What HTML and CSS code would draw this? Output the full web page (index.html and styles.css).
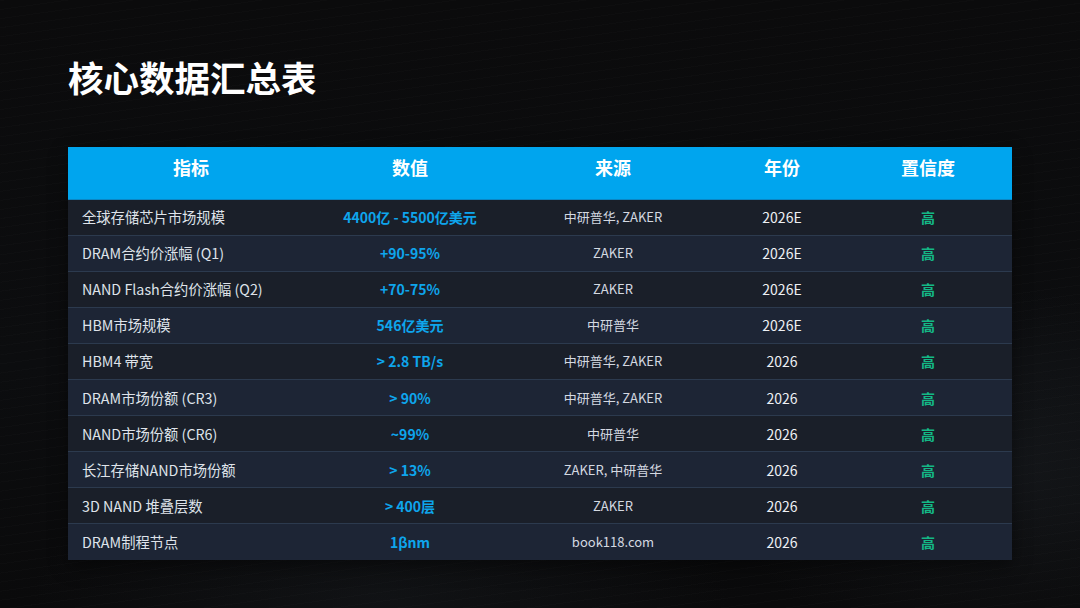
FILE: index.html
```html
<!DOCTYPE html>
<html lang="zh-CN">
<head>
<meta charset="utf-8">
<title>核心数据汇总表</title>
<link rel="stylesheet" href="styles.css">
</head>
<body>
<div class="slide">
  <h1 class="title">核心数据汇总表</h1>
  <table class="data">
    <colgroup>
      <col class="c1"><col class="c2"><col class="c3"><col class="c4"><col class="c5">
    </colgroup>
    <thead>
      <tr><th>指标</th><th>数值</th><th>来源</th><th>年份</th><th>置信度</th></tr>
    </thead>
    <tbody>
      <tr><td class="name">全球存储芯片市场规模</td><td class="val">4400亿 - 5500亿美元</td><td class="src">中研普华, ZAKER</td><td class="yr">2026E</td><td class="conf">高</td></tr>
      <tr><td class="name">DRAM合约价涨幅 (Q1)</td><td class="val">+90-95%</td><td class="src">ZAKER</td><td class="yr">2026E</td><td class="conf">高</td></tr>
      <tr><td class="name">NAND Flash合约价涨幅 (Q2)</td><td class="val">+70-75%</td><td class="src">ZAKER</td><td class="yr">2026E</td><td class="conf">高</td></tr>
      <tr><td class="name">HBM市场规模</td><td class="val">546亿美元</td><td class="src">中研普华</td><td class="yr">2026E</td><td class="conf">高</td></tr>
      <tr><td class="name">HBM4 带宽</td><td class="val">&gt; 2.8 TB/s</td><td class="src">中研普华, ZAKER</td><td class="yr">2026</td><td class="conf">高</td></tr>
      <tr><td class="name">DRAM市场份额 (CR3)</td><td class="val">&gt; 90%</td><td class="src">中研普华, ZAKER</td><td class="yr">2026</td><td class="conf">高</td></tr>
      <tr><td class="name">NAND市场份额 (CR6)</td><td class="val">~99%</td><td class="src">中研普华</td><td class="yr">2026</td><td class="conf">高</td></tr>
      <tr><td class="name">长江存储NAND市场份额</td><td class="val">&gt; 13%</td><td class="src">ZAKER, 中研普华</td><td class="yr">2026</td><td class="conf">高</td></tr>
      <tr><td class="name">3D NAND 堆叠层数</td><td class="val">&gt; 400层</td><td class="src">ZAKER</td><td class="yr">2026</td><td class="conf">高</td></tr>
      <tr><td class="name">DRAM制程节点</td><td class="val">1βnm</td><td class="src">book118.com</td><td class="yr">2026</td><td class="conf">高</td></tr>
    </tbody>
  </table>
</div>
</body>
</html>
```
FILE: styles.css
```css
html, body {
  margin: 0;
  padding: 0;
  background: #0a0a0b;
}
.slide {
  width: 1080px;
  height: 608px;
  box-sizing: border-box;
  padding: 54px 68px 0 68px;
  font-family: "Noto Sans CJK SC", "Noto Sans", sans-serif;
  color: #e6e9ee;
  background:
    radial-gradient(ellipse 420px 260px at 1000px 470px, rgba(60,70,80,0.18), transparent 70%),
    radial-gradient(ellipse 500px 220px at 380px 600px, rgba(40,48,56,0.22), transparent 70%),
    repeating-linear-gradient(172deg, rgba(255,255,255,0.01) 0 1px, transparent 1px 9px),
    linear-gradient(180deg, #0b0b0c 0%, #0c0d0f 60%, #0a0a0b 100%);
  overflow: hidden;
}
.title {
  margin: 0;
  font-size: 35.5px;
  line-height: 46px;
  font-weight: 700;
  color: #ffffff;
}
.data {
  margin-top: 47px;
  width: 944px;
  border-collapse: collapse;
  table-layout: fixed;
  box-shadow: 0 6px 18px rgba(0,0,0,0.45);
}
.c1 { width: 246px; }
.c2 { width: 192px; }
.c3 { width: 214px; }
.c4 { width: 124px; }
.c5 { width: 168px; }
.data thead th {
  background: #00a5ee;
  color: #ffffff;
  font-size: 18px;
  font-weight: 700;
  height: 52px;
  box-sizing: border-box;
  padding: 0 0 12px 0;
  line-height: 28px;
  text-align: center;
  border-bottom: 1px solid #0b86c4;
}
.data tbody tr {
  height: 36px;
  background: #1a1f29;
}
.data tbody tr:nth-child(even) {
  background: #1d2535;
}
.data tbody td {
  padding: 0;
  height: 35.1px;
  font-size: 14px;
  line-height: 20px;
  text-align: center;
  color: #dfe3ea;
  border-top: 1px solid #2c3a4e;
  white-space: nowrap;
}
.data tbody tr:first-child td {
  border-top: none;
}
.data td.name {
  text-align: left;
  padding-left: 14px;
  font-size: 14.3px;
}
.data td.val {
  color: #0ea5ec;
  font-weight: 700;
}
.data td.src {
  font-size: 13px;
  color: #d4d9e1;
}
.data td.yr {
  color: #eef0f4;
}
.data td.conf {
  color: #14b886;
  font-weight: 700;
}
```
